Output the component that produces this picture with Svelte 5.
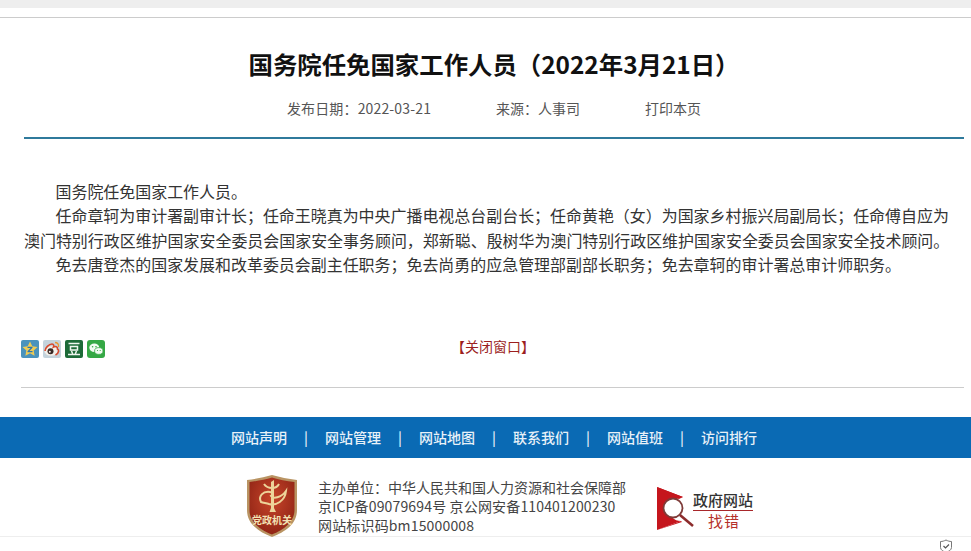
<script lang="ts">
  const navItems = ["网站声明", "网站管理", "网站地图", "联系我们", "网站值班", "访问排行"];
</script>

<div class="page">
  <div class="strip"></div>

  <main class="article">
    <h1>国务院任免国家工作人员（2022年3月21日）</h1>
    <div class="meta">
      <span class="date">发布日期：2022-03-21</span>
      <span>来源：人事司</span>
      <span>打印本页</span>
    </div>

    <div class="content">
      <p>国务院任免国家工作人员。</p>
      <p>任命章轲为审计署副审计长；任命王晓真为中央广播电视总台副台长；任命黄艳（女）为国家乡村振兴局副局长；任命傅自应为澳门特别行政区维护国家安全委员会国家安全事务顾问，郑新聪、殷树华为澳门特别行政区维护国家安全委员会国家安全技术顾问。</p>
      <p>免去唐登杰的国家发展和改革委员会副主任职务；免去尚勇的应急管理部副部长职务；免去章轲的审计署总审计师职务。</p>
    </div>

    <div class="tools">
      <div class="share">
        <svg class="icon" viewBox="0 0 18 18" aria-hidden="true">
          <rect width="18" height="18" rx="2" fill="#4a93bd" />
          <path d="M9 1.500l2.300 4.800 5.200.7-3.800 3.600.9 5.200L9 13.300l-4.600 2.500.9-5.200L1.500 7l5.200-.7z" fill="#f0cc55" />
          <path d="M6.500 6.800h5v1l-3 3.200h3v1.200h-5v-1l3-3.200h-3z" fill="#2a76b0" />
        </svg>
        <svg class="icon" viewBox="0 0 18 18" aria-hidden="true">
          <rect width="18" height="18" rx="2" fill="#c4d3dc" />
          <ellipse cx="8" cy="11" rx="6.500" ry="4.800" fill="#f4f0ea" />
          <path d="M2 11c0-3 4-7 7-7 2 0 2 2 1.500 3 2-1 4.500-.5 4 2 1.500.5 2 4-2 6" fill="none" stroke="#d9482b" stroke-width="1.600" />
          <circle cx="7.500" cy="11.300" r="3" fill="#3a2a26" />
          <circle cx="6.800" cy="11.800" r="1" fill="#f4f0ea" />
          <path d="M12 2.500c2.500 0 4 1.800 3.500 4.500" fill="none" stroke="#e8962e" stroke-width="1.300" />
        </svg>
        <svg class="icon" viewBox="0 0 18 18" aria-hidden="true">
          <rect width="18" height="18" rx="2" fill="#1d6b38" />
          <path d="M3.500 3.500h11M5.500 6.500h7v3.500h-7zM6.500 11l1.200 3M11.500 11l-1.200 3M3 14.500h12" fill="none" stroke="#eef6ee" stroke-width="1.500" />
        </svg>
        <svg class="icon" viewBox="0 0 18 18" aria-hidden="true">
          <rect width="18" height="18" rx="3" fill="#35a845" />
          <ellipse cx="7.300" cy="7.800" rx="5" ry="4.200" fill="#f2fbf2" />
          <ellipse cx="11.800" cy="11" rx="4.200" ry="3.400" fill="#f2fbf2" stroke="#35a845" stroke-width="0.800" />
          <circle cx="5.600" cy="6.800" r="0.800" fill="#35a845" />
          <circle cx="9" cy="6.800" r="0.800" fill="#35a845" />
          <circle cx="10.500" cy="10.500" r="0.600" fill="#35a845" />
          <circle cx="13.200" cy="10.500" r="0.600" fill="#35a845" />
        </svg>
      </div>
      <span class="close">【关闭窗口】</span>
    </div>
  </main>

  <nav class="nav">
    {#each navItems as item, i (item)}
      {#if i > 0}<span class="sep">|</span>{/if}
      <span>{item}</span>
    {/each}
  </nav>

  <footer class="footer">
    <svg class="badge" viewBox="0 0 52 62" aria-hidden="true">
      <defs>
        <radialGradient id="badgeFill" cx="50%" cy="38%" r="65%">
          <stop offset="0%" stop-color="#c8452a" />
          <stop offset="100%" stop-color="#8f2415" />
        </radialGradient>
      </defs>
      <path d="M1 5C10 4 18 2 26 0c8 2 16 4 25 5v30c0 14-12 22-25 27C13 57 1 49 1 35z" fill="#b99463" />
      <path d="M3.500 7C12 6 19 4.500 26 2.500 33 4.500 40 6 48.500 7v28c0 12-11 20-22.500 24.500C14.500 55 3.500 47 3.500 35z" fill="url(#badgeFill)" />
      <path d="M23.500 37l1.500-4V7l3-2v28l2 4z" fill="#edd49a" />
      <path d="M18 9c2 3 5 4 8 4 3 0 6-2 7-4M15 27c-3-6 2-11 9-10 3 .5 3 3 1 4 2 3 10 2 15-5-1 10-10 15-17 13-3-1-6-1-8-2z" fill="none" stroke="#edd49a" stroke-width="2" />
      <text x="26" y="49" class="badge-text">党政机关</text>
    </svg>

    <div class="org">
      <div>主办单位：中华人民共和国人力资源和社会保障部</div>
      <div class="code">京ICP备09079694号 京公网安备110401200230</div>
      <div class="code">网站标识码bm15000008</div>
    </div>

    <svg class="jiucuo" viewBox="0 0 98 44" aria-hidden="true">
      <path d="M0 0l26 10c-9 1-14 8-14 13 0 6 5 11 12 11L0 43z" fill="#c5161d" />
      <path d="M0 0l26 10-4 2L4 6zM0 43l24-9 1 1L0 43z" fill="#c5161d" />
      <circle cx="16" cy="21" r="9.500" fill="#fff" stroke="#7e3b38" stroke-width="1.800" />
      <path d="M23 28l13 11" stroke="#8c2c2c" stroke-width="2.600" />
      <text x="36" y="19" class="jc-top">政府网站</text>
      <path d="M36 23.500h60" stroke="#a8272a" stroke-width="1" />
      <text x="67" y="40" class="jc-bottom">找错</text>
    </svg>
  </footer>

  <div class="bottom">
    <svg class="shield" viewBox="0 0 14 14" aria-hidden="true">
      <path d="M1.500 2.500c2 0 3.500-.5 5.500-1.500 2 1 3.500 1.500 5.500 1.500v6c0 2.500-3 4-5.500 5-2.500-1-5.500-2.500-5.500-5z" fill="#fff" stroke="#777" stroke-width="1" />
      <path d="M4.500 7l2 2 3.500-3.500" fill="none" stroke="#555" stroke-width="1.200" />
    </svg>
  </div>
</div>

<style>
  :global(body) {
    background: #fff;
    overflow: hidden;
  }

  .page {
    width: 971px;
    height: 551px;
    overflow: hidden;
    font-family: "Noto Sans CJK SC", "Noto Sans", sans-serif;
    color: #333;
  }

  .strip {
    height: 8px;
    background: #eee;
    margin-bottom: 9px;
  }

  .article {
    border-top: 1px solid #ccc;
    padding: 0 7px 0 24px;
  }

  h1 {
    margin: 0;
    padding-top: 28px;
    font-size: 24.4px;
    line-height: 36px;
    font-weight: 700;
    color: #111;
    text-align: center;
  }

  .meta {
    display: flex;
    justify-content: center;
    gap: 65px;
    margin-top: 16px;
    font-size: 14px;
    line-height: 20px;
    color: #555;
  }

  .date {
    letter-spacing: 0.15px;
  }

  .content {
    border-top: 2px solid #2f7a9c;
    margin-top: 19px;
    padding-top: 40px;
    font-size: 15.96px;
    line-height: 24.4px;
    color: #333;
  }

  .content p {
    margin: 0;
    text-indent: 31.500px;
  }

  .tools {
    display: flex;
    align-items: center;
    height: 26px;
    margin-top: 59px;
    margin-left: -3px;
    padding-bottom: 25px;
    border-bottom: 1px solid #ccc;
  }

  .share {
    display: flex;
    gap: 4px;
  }

  .icon {
    width: 18px;
    height: 18px;
    display: block;
  }

  .close {
    margin: 0 0 5px 346px;
    font-size: 14px;
    color: #9c1f1f;
  }

  .nav {
    display: flex;
    justify-content: center;
    align-items: center;
    gap: 14px;
    height: 41px;
    margin-top: 29px;
    padding-left: 17px;
    background: #0a6ab4;
    color: #e8f1f8;
    font-size: 14px;
    font-weight: 500;
  }

  .sep {
    width: 10px;
    text-align: center;
  }

  .footer {
    display: flex;
    align-items: flex-start;
    height: 79px;
    padding: 17px 0 0 246px;
    box-sizing: border-box;
    border-bottom: 1px solid #eee;
  }

  .badge {
    width: 52px;
    height: 62px;
    flex: none;
  }

  .badge-text {
    font-size: 10px;
    font-weight: 700;
    fill: #f3e2b4;
    text-anchor: middle;
  }

  .org {
    margin-left: 20px;
    padding-top: 3px;
    font-size: 14px;
    line-height: 19px;
    color: #444;
    white-space: nowrap;
  }

  .code {
    letter-spacing: 0.16px;
  }

  .jiucuo {
    width: 98px;
    height: 44px;
    margin: 12px 0 0 31px;
    flex: none;
  }

  .jc-top {
    font-size: 15px;
    font-weight: 500;
    fill: #333;
  }

  .jc-bottom {
    font-size: 15px;
    fill: #b5302a;
    text-anchor: middle;
    letter-spacing: 1px;
  }

  .bottom {
    display: flex;
    justify-content: flex-end;
    padding: 2px 18px 0 0;
  }

  .shield {
    width: 14px;
    height: 14px;
    display: block;
  }
</style>
